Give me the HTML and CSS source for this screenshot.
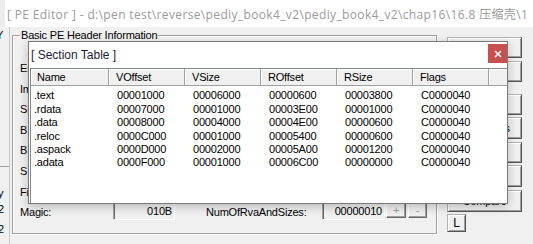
FILE: index.html
```html
<!DOCTYPE html>
<html>
<head>
<meta charset="utf-8">
<link rel="stylesheet" href="styles.css">
</head>
<body>
<div class="screen">
  <div class="titlebar">
    <div class="tb-edge"></div>
    <span class="title">[ PE Editor ] - d:\pen test\reverse\pediy_book4_v2\pediy_book4_v2\chap16\16.8 压缩壳\1</span>
  </div>
  <div class="client">
    <div class="behind">
      <div class="frag f1">Y</div>
      <div class="hline"></div>
      <div class="frag f2">y</div>
      <div class="frag f3">2</div>
      <div class="frag f4">2</div>
    </div>
    <div class="group">
      <div class="legend">Basic PE Header Information</div>
      <div class="rows">
        <div class="row"><span class="lbl">En</span></div>
        <div class="row"><span class="lbl">Im</span></div>
        <div class="row"><span class="lbl">Si</span></div>
        <div class="row"><span class="lbl">B.</span></div>
        <div class="row"><span class="lbl">B.</span></div>
        <div class="row"><span class="lbl">S</span></div>
        <div class="row"><span class="lbl">Fi</span></div>
        <div class="row"><span class="lbl">Magic:</span><span class="edit">010B</span><span class="lbl2">NumOfRvaAndSizes:</span><span class="edit">00000010</span><span class="spin sp1">+</span><span class="spin sp2">-</span></div>
      </div>
    </div>
    <div class="buttons">
      <div class="btn b1"></div>
      <div class="btn b2"></div>
      <div class="btn b3"></div>
      <div class="btn b4"><span class="btxt">Directories</span></div>
      <div class="btn b5"></div>
      <div class="btn b6"></div>
      <div class="btn b7"><span class="btxt">Compare</span></div>
      <div class="btn bl">L</div>
    </div>
  </div>

  <div class="popup">
    <div class="ptitle">
      <span class="ptext">[ Section Table ]</span>
      <div class="close">
        <svg width="8" height="8" viewBox="0 0 8 8"><path d="M1 1L7 7M7 1L1 7" stroke="#fff" stroke-width="1.6" fill="none"/></svg>
      </div>
    </div>
    <div class="list">
      <div class="lhead">
        <div class="hc c0">Name</div>
        <div class="hc c1">VOffset</div>
        <div class="hc c1">VSize</div>
        <div class="hc c1">ROffset</div>
        <div class="hc c1">RSize</div>
        <div class="hc c1">Flags</div>
        <div class="hc cfill"></div>
      </div>
      <div class="lbody">
        <div class="lrow"><span class="dc d0">.text</span><span class="dc d1">00001000</span><span class="dc d1">00006000</span><span class="dc d1">00000600</span><span class="dc d1">00003800</span><span class="dc d1">C0000040</span></div>
        <div class="lrow"><span class="dc d0">.rdata</span><span class="dc d1">00007000</span><span class="dc d1">00001000</span><span class="dc d1">00003E00</span><span class="dc d1">00001000</span><span class="dc d1">C0000040</span></div>
        <div class="lrow"><span class="dc d0">.data</span><span class="dc d1">00008000</span><span class="dc d1">00004000</span><span class="dc d1">00004E00</span><span class="dc d1">00000600</span><span class="dc d1">C0000040</span></div>
        <div class="lrow"><span class="dc d0">.reloc</span><span class="dc d1">0000C000</span><span class="dc d1">00001000</span><span class="dc d1">00005400</span><span class="dc d1">00000600</span><span class="dc d1">C0000040</span></div>
        <div class="lrow"><span class="dc d0">.aspack</span><span class="dc d1">0000D000</span><span class="dc d1">00002000</span><span class="dc d1">00005A00</span><span class="dc d1">00001200</span><span class="dc d1">C0000040</span></div>
        <div class="lrow"><span class="dc d0">.adata</span><span class="dc d1">0000F000</span><span class="dc d1">00001000</span><span class="dc d1">00006C00</span><span class="dc d1">00000000</span><span class="dc d1">C0000040</span></div>
      </div>
    </div>
  </div>
</div>
</body>
</html>
```
FILE: styles.css
```css
* { box-sizing: border-box; }
html, body { margin: 0; padding: 0; }
body {
  width: 533px;
  height: 244px;
  overflow: hidden;
  background: #f0f0f0;
  font-family: "Liberation Sans", Arial, sans-serif;
  font-size: 11px;
  letter-spacing: -0.2px;
  color: #000;
}
.screen {
  position: relative;
  width: 533px;
  height: 244px;
  overflow: hidden;
}
.titlebar {
  height: 27px;
  background: #fff;
  display: flex;
  align-items: center;
  white-space: nowrap;
  overflow: hidden;
}
.tb-edge {
  width: 5px;
  height: 27px;
  background: #ececec;
  flex: none;
}
.title {
  margin-left: 2px;
  font-family: "Open Sans", "Noto Sans CJK SC", sans-serif;
  font-size: 12px;
  letter-spacing: 0.36px;
  color: #9b9b9b;
  padding-top: 1px;
}
.client {
  display: flex;
  align-items: flex-start;
  height: 217px;
}
.behind {
  width: 10px;
  height: 217px;
  flex: none;
  overflow: hidden;
  border-right: 1px solid #c9c9c9;
  display: flex;
  flex-direction: column;
}
.frag {
  font-size: 11px;
  line-height: 12px;
  height: 12px;
}
.f1 { margin-top: 2px; margin-left: -4px; }
.hline { margin-top: 125px; height: 1px; background: #a0a0a0; }
.f2 { margin-top: 20px; margin-left: -2px; }
.f3 { margin-top: 4px; margin-left: -2px; }
.f4 { margin-top: 8px; margin-left: -2px; }

.group {
  margin-left: 2px;
  margin-top: 8px;
  width: 425px;
  height: 199px;
  border: 1px solid #a0a0a0;
  box-shadow: inset 1px 1px 0 #fff, 1px 1px 0 #fff;
  flex: none;
}
.legend {
  width: max-content;
  margin-left: 7px;
  margin-top: -7px;
  height: 13px;
  line-height: 13px;
  padding: 0 1px;
  background: #f0f0f0;
}
.rows {
  margin-top: 17px;
  padding-left: 7px;
  display: flex;
  flex-direction: column;
  gap: 2.6px;
}
.row {
  display: flex;
  align-items: flex-start;
  height: 18px;
  line-height: 18px;
  white-space: nowrap;
}
.lbl { width: 93px; flex: none; }
.lbl2 { width: 116px; margin-left: 31px; flex: none; }
.edit {
  width: 62px;
  height: 18px;
  margin-top: -1px;
  line-height: 16px;
  text-align: right;
  padding-right: 2px;
  border: 1px solid;
  border-color: #a0a0a0 #fff #fff #a0a0a0;
  box-shadow: inset 1px 1px 0 #696969;
  flex: none;
}
.lbl2 + .edit { width: 63px; }
.spin {
  height: 15px;
  line-height: 13px;
  text-align: center;
  color: #a0a0a0;
  border: 1px solid;
  border-color: #fff #696969 #696969 #fff;
  box-shadow: inset -1px -1px 0 #a0a0a0;
  flex: none;
}
.sp1 { width: 20px; margin-left: 1px; }
.sp2 { width: 19px; margin-left: 2px; }

.buttons {
  margin-left: 10px;
  margin-top: 10px;
  width: 75px;
  display: flex;
  flex-direction: column;
  flex: none;
}
.btn {
  width: 75px;
  height: 21px;
  border: 1px solid;
  border-color: #b4b4b4 #555 #555 #b4b4b4;
  box-shadow: inset 1px 1px 0 #fff, inset -1px -1px 0 #a0a0a0;
  background: #f0f0f0;
  display: flex;
  align-items: center;
  justify-content: center;
  white-space: nowrap;
}
.b2 { margin-top: 3px; }
.b3 { margin-top: 12px; }
.b4 { margin-top: 2px; height: 22px; }
.b5 { margin-top: 3px; }
.b6 { margin-top: 2px; height: 22px; }
.b7 { margin-top: 3px; height: 22px; }
.bl { margin-top: 2px; width: 19px; height: 18px; font-size: 12px; }

.popup {
  position: absolute;
  left: 28px;
  top: 41px;
  width: 480px;
  height: 163px;
  background: #fff;
  border: 1px solid #7a7a7a;
  box-shadow: 0 3px 9px rgba(0,0,0,0.22);
  display: flex;
  flex-direction: column;
}
.ptitle {
  height: 26px;
  display: flex;
  align-items: flex-start;
  flex: none;
}
.ptext {
  margin-left: 2px;
  font-size: 12px;
  letter-spacing: 0;
  line-height: 26px;
  color: #1e1c3a;
}
.close {
  margin-left: auto;
  margin-top: 2px;
  width: 19px;
  height: 19px;
  background: #c75050;
  display: flex;
  align-items: center;
  justify-content: center;
}
.close svg { display: block; }
.list {
  flex: 1;
  margin-left: 1px;
  border-left: 1px solid #828790;
  border-top: 1px solid #828790;
  background: #fff;
  display: flex;
  flex-direction: column;
}
.lhead {
  display: flex;
  height: 17px;
  background: #f0f0f0;
  border-bottom: 1px solid #a0a0a0;
  flex: none;
}
.hc {
  height: 16px;
  line-height: 16px;
  border-right: 1px solid #a0a0a0;
  box-shadow: inset 1px 1px 0 #fff;
  padding-left: 7px;
  white-space: nowrap;
  flex: none;
}
.hc.c0 { width: 78px; padding-left: 6px; }
.hc.c1 { width: 76px; }
.hc.cfill { flex: 1; border-right: none; }
.lbody {
  padding-top: 3.4px;
}
.lrow {
  display: flex;
  height: 13.4px;
  line-height: 13.4px;
  white-space: nowrap;
}
.dc { flex: none; }
.d0 { width: 78px; padding-left: 3px; }
.d1 { width: 76px; padding-left: 8px; }
```
